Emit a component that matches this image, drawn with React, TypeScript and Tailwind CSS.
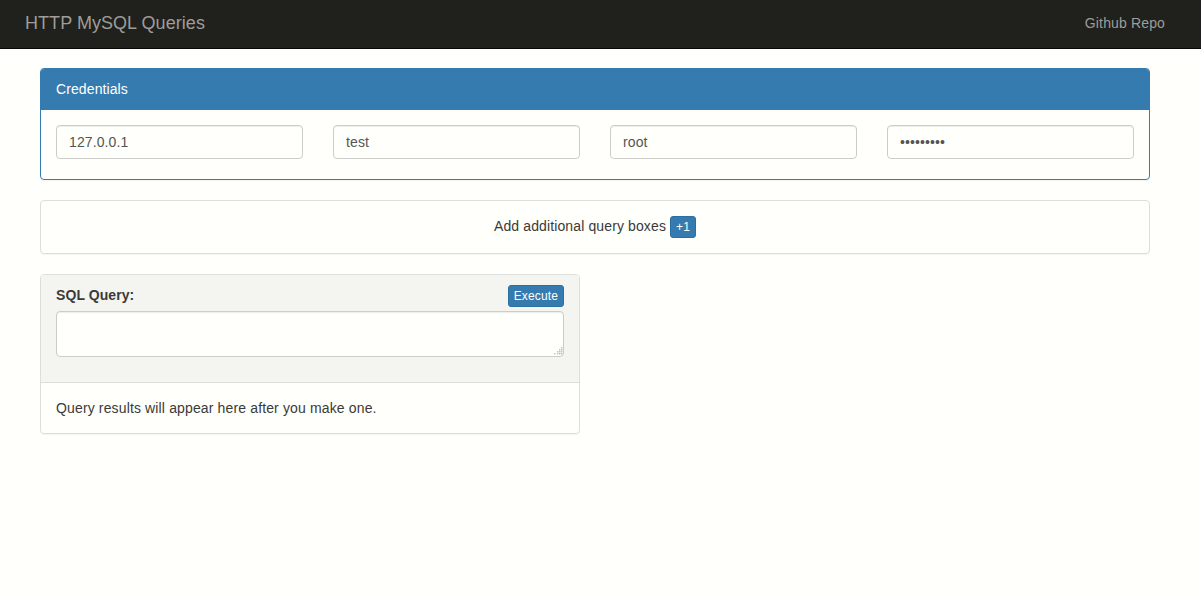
const inputClass =
  'h-[34px] w-full rounded border border-[#ccccc9] bg-[#fffffb] px-3 text-sm tracking-[0.1px] text-[#555553] shadow-[inset_0_1px_1px_rgba(0,0,0,0.075)] outline-none'

const buttonClass =
  'h-[22px] rounded-[3px] border border-[#2e6da0] bg-[#367bb0] px-[5px] text-xs leading-[18px] tracking-[0.14px] text-[#fffffb]'

const credentials = [
  { type: 'text', value: '127.0.0.1' },
  { type: 'text', value: 'test' },
  { type: 'text', value: 'root' },
  { type: 'password', value: 'password1' },
]

// dots of the textarea's resize grip
const gripDots = [
  [9, 0],
  [7, 2],
  [9, 2],
  [5, 4],
  [7, 4],
  [9, 4],
  [2, 6],
  [5, 6],
  [7, 6],
  [9, 6],
]

function Navbar() {
  return (
    <nav className="flex h-[49px] items-center justify-between border-b border-[#080808] bg-[#20201c] pl-[25px] pr-9 text-[#9d9d9a]">
      <a className="mb-[2px] text-lg tracking-[0.05px]">HTTP MySQL Queries</a>
      <a className="mb-[2px] text-sm tracking-[0.14px]">Github Repo</a>
    </nav>
  )
}

function Credentials() {
  return (
    <section className="rounded border border-[#367bb0] shadow-[0_1px_1px_rgba(0,0,0,0.05)]">
      <div className="flex h-[41px] items-center rounded-t-[3px] bg-[#367bb0] px-[15px] pb-[2px] text-sm tracking-[0.1px] text-[#fffffb]">
        Credentials
      </div>
      <div className="grid grid-cols-4 gap-[30px] px-[15px] pb-5 pt-[15px]">
        {credentials.map((field) => (
          <input key={field.value} type={field.type} defaultValue={field.value} className={inputClass} />
        ))}
      </div>
    </section>
  )
}

function QueryBox() {
  return (
    <section className="w-[540px] overflow-hidden rounded border border-[#dddddA] shadow-[0_1px_1px_rgba(0,0,0,0.05)]">
      <div className="border-b border-[#dddddA] bg-[#f4f4f1] px-[15px] pb-[25px] pt-[10px]">
        <div className="flex h-[26px] items-start justify-between">
          <label className="text-sm font-bold leading-5 tracking-[0.08px]">SQL Query:</label>
          <button className={buttonClass}>Execute</button>
        </div>
        <div className="relative">
          <textarea className="block h-[46px] w-full resize-none rounded border border-[#ccccc9] bg-[#fffffb] px-3 py-[6px] text-sm shadow-[inset_0_1px_1px_rgba(0,0,0,0.075)] outline-none" />
          <svg className="absolute bottom-[2px] right-[1px]" width="11" height="8" viewBox="0 0 11 8">
            {gripDots.map(([x, y]) => (
              <rect key={`${x}-${y}`} x={x} y={y} width="1.5" height="1.5" fill="#c4c4c0" />
            ))}
          </svg>
        </div>
      </div>
      <p className="p-[15px] text-sm leading-5 tracking-[0.14px]">Query results will appear here after you make one.</p>
    </section>
  )
}

export default function App() {
  return (
    <div className="min-h-[600px] bg-[#fffffb] font-['Liberation_Sans',Arial,sans-serif] text-sm text-[#3a3a38]">
      <Navbar />
      <main className="flex flex-col gap-5 pl-10 pr-[51px] pt-[19px]">
        <Credentials />
        <section className="flex h-[54px] items-center justify-center gap-1 rounded border border-[#dddddA] shadow-[0_1px_1px_rgba(0,0,0,0.05)]">
          <span className="mb-[2px] tracking-[0.12px]">Add additional query boxes</span>
          <button className={buttonClass}>+1</button>
        </section>
        <QueryBox />
      </main>
    </div>
  )
}
